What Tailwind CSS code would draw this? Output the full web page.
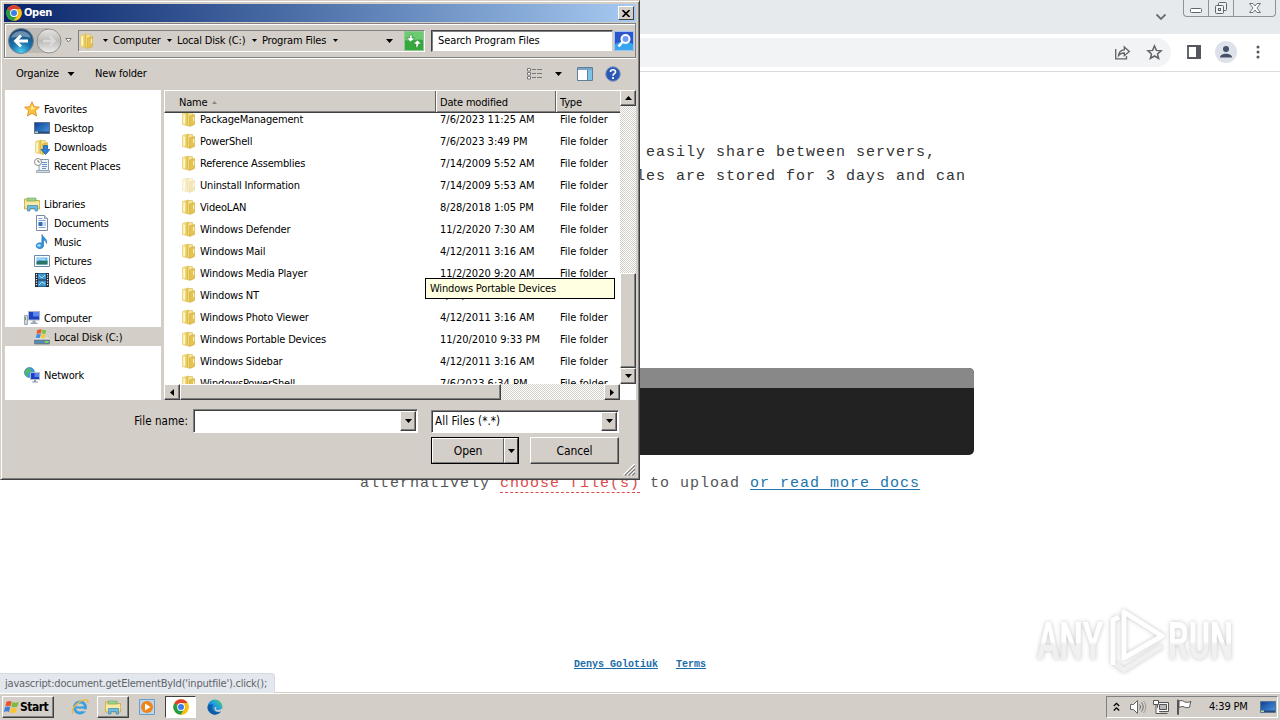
<!DOCTYPE html>
<html lang="en">
<head>
    <meta charset="UTF-8">
    <meta name="viewport" content="width=device-width, initial-scale=1.0">
    <title>Open</title>
    <script src="https://cdn.jsdelivr.net/npm/@tailwindcss/browser@4"></script>
</head>
<body class="relative w-[1280px] h-[720px] overflow-hidden bg-white text-black font-['DejaVu_Sans_Condensed','DejaVu_Sans',sans-serif] text-[11px] leading-[14px] tracking-[-0.18px]">

    <!-- Icons -->
    <svg class="absolute w-0 h-0">
        <defs>
            <linearGradient id="g-folder" x1="0" x2="1"><stop offset="0" stop-color="#fff3b0"/><stop offset=".5" stop-color="#f0d873"/><stop offset="1" stop-color="#d9b23c"/></linearGradient>
            <linearGradient id="g-blue" x1="0" y1="0" x2="1" y2="1"><stop offset="0" stop-color="#0d3f94"/><stop offset="1" stop-color="#4b9ae6"/></linearGradient>
            <radialGradient id="g-back" cx=".5" cy=".95" r=".9"><stop offset="0" stop-color="#4fd0f5"/><stop offset=".45" stop-color="#1b74ae"/><stop offset="1" stop-color="#1d456f"/></radialGradient>
            <linearGradient id="g-fwd" x1="0" y1="0" x2="0" y2="1"><stop offset="0" stop-color="#e6e5e3"/><stop offset=".5" stop-color="#bdbcba"/><stop offset="1" stop-color="#efeeec"/></linearGradient>
            <linearGradient id="g-edge" x1="0" y1="1" x2="1" y2="0"><stop offset="0" stop-color="#0c59a4"/><stop offset=".55" stop-color="#1b9de2"/><stop offset="1" stop-color="#5fd35f"/></linearGradient>
            <linearGradient id="g-mark" x1="0" y1="0" x2="0" y2="1"><stop offset=".5" stop-color="#fff"/><stop offset=".55" stop-color="#f0f0f0"/></linearGradient>
        </defs>
        <symbol id="folder" viewBox="0 0 16 16">
            <path d="M1.500 2.500 7.500 1v14L1.500 13.500z" fill="url(#g-folder)" stroke="#dcc05a" stroke-width=".6"/>
            <path d="M7 1.500h4.500V14L7 15z" fill="#f6e391" stroke="#d9bd55" stroke-width=".6"/>
            <path d="M8.500 5 13.500 3.500V13.500l-5 2z" fill="#e6c34f" stroke="#cfa93a" stroke-width=".6"/>
            <path d="M3.300 4v8.500" stroke="#fffbe0" stroke-width="1.200"/>
            <path d="M12.600 6v4" stroke="#fff6c8"/>
        </symbol>
        <symbol id="star" viewBox="0 0 16 16">
            <path d="m8 .8 2.100 4.900 5.300.5-4 3.500 1.200 5.300L8 12.200 3.400 15l1.200-5.300-4-3.500 5.300-.5z" fill="#fbc540" stroke="#e08a24" stroke-width=".9"/>
            <path d="M8 3.500 9.200 6.700l3 .4-5.400 1.600z" fill="#fff0a0"/>
        </symbol>
        <symbol id="desktop" viewBox="0 0 16 16">
            <path d="M.5 2.500h15v11H.5z" fill="url(#g-blue)" stroke="#5c7290"/>
            <path d="M1 11.500h14V13H1z" fill="#274a78"/><path d="M1 11.500h3V13H1z" fill="#b8dca0"/>
        </symbol>
        <symbol id="downloads" viewBox="0 0 16 16">
            <use href="#folder"/>
            <path d="M9.500 6.500h4v4H16l-4.500 5L7 10.500h2.500z" fill="#2b80dc" stroke="#1558a8" stroke-width=".7"/>
        </symbol>
        <symbol id="recent" viewBox="0 0 16 16">
            <path d="M5 1.500h9.500v11H5z" fill="#eef4fb" stroke="#8b99aa"/>
            <path d="M8 4.500h5M8 6.500h5M8 8.500h5M8 10.500h4" stroke="#6a93c4"/>
            <path d="M2.500 12.500h13v2h-13z" fill="#d6dee6" stroke="#8b99aa" stroke-width=".8"/>
            <circle cx="4" cy="4" r="3.500" fill="#fff" stroke="#8a8a8a"/><path d="M4 2v2h1.800" fill="none" stroke="#555" stroke-width=".8"/>
        </symbol>
        <symbol id="libraries" viewBox="0 0 16 16">
            <path d="M.5 3h5l1 1.500h9V13H.5z" fill="#f6e08a" stroke="#cfae48"/>
            <path d="M3 2h9v3H3z" fill="#9fd08c" stroke="#6ea55d" stroke-width=".6"/>
            <path d="M.8 6h14.500v4H.8z" fill="#f9e9a6"/>
            <path d="M3.500 15V9.500h10V15h-2.500v-2.500H6V15z" fill="#6cbbe2" stroke="#3b86b8" stroke-width=".7"/>
        </symbol>
        <symbol id="documents" viewBox="0 0 16 16">
            <path d="M2.500.5h8l3 3v12h-11z" fill="#fbfdff" stroke="#7a8ba0"/>
            <path d="M10.500.5v3h3" fill="#cfdcea" stroke="#7a8ba0" stroke-width=".8"/>
            <path d="M4.500 3.500h4M4.500 5.500h7M9.500 8h2.500M9.500 10h2.500M4.500 12.500h7" stroke="#7fa3cc"/>
            <path d="M4.500 7h4v4h-4z" fill="#2f6fb8"/>
        </symbol>
        <symbol id="music" viewBox="0 0 16 16">
            <path d="M8 .5c1 3.500 5.500 3.500 4.500 9-.5-2.500-2-3.500-3-3.500v6a3.700 2.900 0 1 1-1.700-2.700z" fill="#2e97dc" stroke="#1b65ac" stroke-width=".6"/>
            <ellipse cx="5" cy="11.500" rx="1.800" ry="1.200" fill="#a5e2fb"/>
        </symbol>
        <symbol id="pictures" viewBox="0 0 16 16">
            <path d="M.5 2.500h15v11H.5z" fill="#fff" stroke="#6f8aa8"/>
            <path d="M2.500 4.500h11v7h-11z" fill="#63b7ea"/><path d="M2.500 9c4-2.500 6 0 11-1.500v4h-11z" fill="#2b7365"/><path d="M3 6.500c3-2 5 1 8-.5" fill="none" stroke="#d6f0ff"/>
        </symbol>
        <symbol id="videos" viewBox="0 0 16 16">
            <path d="M1 1h14v14H1z" fill="#1f2a38"/>
            <path d="M4 1.500h8v6H4zM4 8.500h8v6H4z" fill="#3f95cf"/><path d="M5 3.500 8 6l3-3M5 13l3-3 3 2" fill="none" stroke="#a6def5"/>
            <path d="M2.500 2v12M13.500 2v12" stroke="#e8eef4" stroke-width="1.300" stroke-dasharray="1.300 1.200"/>
        </symbol>
        <symbol id="computer" viewBox="0 0 16 16">
            <path d="M4.500 1.500h11v8.500h-11z" fill="#1d3fc4" stroke="#aab4c4"/><path d="M9 2h6v4.500H9z" fill="#5a84ee"/>
            <path d="M8.500 10.500h3v2h2v1.500h-7v-1.500h2z" fill="#9aa6b4"/>
            <path d="M.5 5.500h3v9h-3z" fill="#d3d8de" stroke="#8794a3" stroke-width=".8"/><path d="M1.500 7v3" stroke="#5eac4c"/>
        </symbol>
        <symbol id="disk" viewBox="0 0 16 16">
            <path d="M2.500 8h11l2.500 3H0z" fill="#dce0e4"/><path d="M.5 11h15v4H.5z" fill="#6d8598" stroke="#58697a" stroke-width=".6"/><path d="M11 13h3.500" stroke="#6cf05a" stroke-width="1.600"/><path d="M2 13h7" stroke="#3f8fe2" stroke-width="1.200"/>
            <path d="m3.200 1 3-.8 1.500.3-.8 3.700-3 .6-1.300-.3z" fill="#ea5a2b"/><path d="m8.400.8 3.800.5-.8 3.800-3.700-.6z" fill="#7cc242"/><path d="m2.500 5.200 4.200-.3-.9 4-4 .2z" fill="#3f8fe2"/><path d="m7.500 5.200 3.800.6-.8 3.700-3.800-.6z" fill="#fbc832"/>
        </symbol>
        <symbol id="network" viewBox="0 0 16 16">
            <circle cx="5.500" cy="5.500" r="5" fill="#3aa0d8" stroke="#2a6ca0" stroke-width=".6"/><path d="M2 2.500c2-1.500 4-1 5 .5s-1.500 2-3 3 0 3-1 3.500S.5 6 2 2.500z" fill="#58b85e"/>
            <path d="M6.500 5.500h9v7h-9z" fill="#1d3fc4" stroke="#b3bdcc"/><path d="M10.500 6h4.500v4h-4.500z" fill="#5a84ee"/><path d="M10 13h2v1.500h2v1H8v-1h2z" fill="#8d99a8"/>
        </symbol>
        <symbol id="chrome" viewBox="0 0 16 16">
            <circle cx="8" cy="8" r="7.700" fill="#fbbf12"/>
            <path d="M8 8 1.330 4.150A7.700 7.700 0 0 1 14.670 4.150H8z" fill="#e23c2e"/>
            <path d="M8 8 1.330 4.150A7.700 7.700 0 0 0 8 15.700L11.300 9.900z" fill="#259c47"/>
            <path d="M8 4.150h6.670A7.700 7.700 0 0 1 8 15.700l3.300-5.800z" fill="#fbbf12"/>
            <circle cx="8" cy="8" r="3.900" fill="#fff"/><circle cx="8" cy="8" r="3" fill="#3d7de8"/>
        </symbol>
        <symbol id="winflag" viewBox="0 0 16 14">
            <path d="M2.500 1.800c2-1.300 3.600-1 5.200-.2L6.400 6.400C4.800 5.600 3.200 5.500 1.300 6.500z" fill="#e8552a"/>
            <path d="M8.500 2c2 .9 3.800.9 6.200-.3l-1.300 4.900c-2.200 1-4.200.9-6.100.1z" fill="#7cba3c"/>
            <path d="M1.100 7.300c1.800-1 3.500-.9 5.100-.1L4.900 12c-1.600-.9-3.200-.9-5.100.1z" fill="#3f7fd8"/>
            <path d="M7.100 7.600c2 .9 3.800.9 6.100-.2l-1.300 4.900c-2.200 1-4.200.9-6.100.1z" fill="#fbc32e"/>
        </symbol>
        <symbol id="down" viewBox="0 0 7 4"><path d="M0 0h7L3.500 4z"/></symbol>
    </svg>

    <!-- Browser window -->
    <div class="flex flex-col h-[692px]">
        <div class="flex h-[34px] shrink-0 justify-end bg-[#e7eaed]">
            <svg class="mt-3 mr-[16px] w-[12px] h-[10px]" viewBox="0 0 12 10" fill="none" stroke="#6b6e72" stroke-width="1.800"><path d="M1.500 2.500 6 7l4.500-4.500"/></svg>
            <div class="flex w-[93px] h-[17px] mr-1 border border-t-0 border-[#8f9397] rounded-b-[4px] text-[#5f6368]">
                <div class="w-[25px] flex justify-center border-r border-[#8f9397]"><svg class="w-[14px] h-4" viewBox="0 0 14 16"><rect x="1.500" y="8.500" width="11" height="4" rx="1" fill="#fff" stroke="#5f6470"/></svg></div>
                <div class="w-[25px] flex justify-center border-r border-[#8f9397]"><svg class="w-4 h-4" viewBox="0 0 16 16" fill="#eef0f2" stroke="#5f6470"><rect x="5.500" y="2.500" width="8" height="8" rx="1"/><rect x="2.500" y="5.500" width="8" height="8" rx="1"/><rect x="5.500" y="8.500" width="2" height="2"/></svg></div>
                <div class="flex-1 flex justify-center"><svg class="w-[14px] h-4" viewBox="0 0 14 16" fill="#fff" stroke="#5f6470" stroke-width=".9"><path d="M1.500 3.500h3.500l2 2.500 2-2.500h3.500L9 8l3.500 4.500H9L7 10l-2 2.500H1.500L5 8z"/></svg></div>
            </div>
        </div>
        <div class="flex h-[38px] shrink-0 items-center justify-end border-b border-[#d9dbde] bg-white pb-[1px]">
            <div class="flex w-[1171px] h-[29px] items-center justify-end rounded-r-full bg-[#f1f3f4] pr-2 gap-[15px]">
                <svg class="w-[17px] h-[17px]" viewBox="0 0 17 17" fill="none" stroke="#5f6368" stroke-width="1.300"><path d="M1.700 5v9.800h10.800V12"/><path d="M4.500 11.500c.4-3.800 2.500-5.500 5.800-5.700V3l5 4.400-5 4.300V9c-2.800 0-4.500.7-5.800 2.500z"/></svg>
                <svg class="w-[17px] h-[17px]" viewBox="0 0 17 17" fill="none" stroke="#5f6368" stroke-width="1.500"><path d="m8.500 2 1.900 4.400 4.700.4-3.600 3.100 1.100 4.600-4.100-2.500-4.100 2.500 1.100-4.600L1.900 6.800l4.700-.4z"/></svg>
            </div>
            <svg class="ml-4 w-[14px] h-[14px]" viewBox="0 0 14 14"><path d="M1 1h12v12H1z" fill="#fff" stroke="#54575c" stroke-width="1.800"/><path d="M9 0h5v14H9z" fill="#54575c"/></svg>
            <svg class="ml-[14px] w-[22px] h-[22px]" viewBox="0 0 22 22" fill="#47506b"><circle cx="11" cy="11" r="11" fill="#dde2ea"/><circle cx="11" cy="8" r="3"/><path d="M5 16.500c0-5 12-5 12 0z"/></svg>
            <svg class="ml-[19px] mr-5 w-1 h-[14px]" viewBox="0 0 4 14" fill="#54575c"><circle cx="2" cy="2" r="1.500"/><circle cx="2" cy="7" r="1.500"/><circle cx="2" cy="12" r="1.500"/></svg>
        </div>

        <main class="flex flex-col flex-1 px-[306px] pt-[69px] font-['Liberation_Mono',monospace] text-[15px] leading-6 tracking-[1px] text-[#333]">
            <p class="pl-[330px] whitespace-pre"> easily share between servers,<br>les are stored for 3 days and can</p>
            <div class="mt-[179px] h-[87px] w-[668px] shrink-0 rounded-[5px] overflow-hidden bg-[#222]">
                <div class="h-5 bg-[#888]"></div>
            </div>
            <p class="mt-[17px] pl-[54px] text-[#555] whitespace-nowrap">alternatively <a class="text-[#dd4b4b] border-b border-dashed border-[#dd4b4b] leading-4 inline-block h-[17px]">choose file(s)</a> to upload <a class="text-[#1b75ab] underline underline-offset-2">or read more docs</a></p>
            <div class="mt-auto mb-[19px] ml-[268px] flex gap-[18px] text-[10px] leading-4 tracking-normal font-bold text-[#1a6ca8] underline">
                <a>Denys Golotiuk</a><a>Terms</a>
            </div>
        </main>
    </div>

    <div class="absolute left-0 top-[673px] w-[275px] h-[20px] rounded-tr-[4px] border-t border-r border-[#d5dae0] bg-[#e3e8ee] pl-[5px] leading-[19px] tracking-[-0.21px] text-[#5f6368]">javascript:document.getElementById('inputfile').click();</div>

    <svg class="absolute left-[1030px] top-[600px] w-[210px] h-[80px] drop-shadow-[0_0_2px_#c4c4c4]" viewBox="0 0 210 80" fill="url(#g-mark)">
        <g font-family="Roboto" font-weight="700" font-size="51">
            <text x="7" y="59" textLength="66" lengthAdjust="spacingAndGlyphs">ANY</text>
            <text x="138" y="59" textLength="65" lengthAdjust="spacingAndGlyphs">RUN</text>
        </g>
        <g fill="none" stroke="#fff" stroke-width="5" stroke-linejoin="round"><path d="M83 65V20l6-3"/><path d="M86 64l8 6 38-24" stroke="#f0f0f0"/><path d="M94 12v46l38-22z"/></g>
    </svg>

    <!-- Taskbar -->
    <div class="flex h-7 items-center border-t border-[#d4cec8] bg-[#d4cec8] shadow-[inset_0_1px_#fff] pt-[1px]">
        <button class="ml-[2px] flex w-[52px] h-[22px] items-center pl-[1px] border border-t-white border-l-white border-r-[#404040] border-b-[#404040] shadow-[inset_-1px_-1px_#808080] font-bold text-[12px] tracking-[-0.5px]">
            <svg class="w-4 h-[14px] shrink-0"><use href="#winflag"/></svg><span>Start</span>
        </button>
        <svg class="ml-[17px] w-[18px] h-[18px]" viewBox="0 0 18 18" fill="none"><circle cx="9" cy="9.500" r="5.500" stroke="#3aa0e0" stroke-width="3"/><path d="M5 9.500h9.500" stroke="#3aa0e0" stroke-width="2.200"/><path d="M11 11.300h6v2h-6z" fill="#d4cec8"/><path d="M2 15.500C-1 12 8 1 16 2c1.500.3 1 2 .5 3" stroke="#f0b93a" stroke-width="1.400"/></svg>
        <div class="ml-[8px] flex w-8 h-[22px] items-center justify-center border border-t-white border-l-white border-r-[#404040] border-b-[#404040] shadow-[inset_-1px_-1px_#808080]"><svg class="w-4 h-4"><use href="#libraries"/></svg></div>
        <svg class="ml-[10px] w-4 h-4" viewBox="0 0 16 16"><path d="M.5.5h15v15H.5z" fill="#b9d6ef" stroke="#6f9cc6"/><circle cx="8" cy="8" r="6" fill="#f08418"/><path d="m6 4.500 5.500 3.500L6 11.500z" fill="#fff"/></svg>
        <div class="ml-[10px] flex w-[31px] h-[22px] items-center justify-center border border-t-[#404040] border-l-[#404040] border-r-white border-b-white bg-white"><svg class="w-4 h-4"><use href="#chrome"/></svg></div>
        <svg class="ml-[11px] w-[16px] h-[16px]" viewBox="0 0 17 17"><circle cx="8.500" cy="8.500" r="8" fill="url(#g-edge)"/><path d="M.6 9C.8 6 4 5 6.500 6 5 7.500 4.800 11 7.500 13c2.200 1.600 5 1.400 7.300.4-2.300 3.600-7 4-10 2.200C2 14 .5 11.500.6 9z" fill="#0f5ca8"/><path d="M10 8.200c.3 1.300-1.300 1.800-.4 2.700 1.200 1.200 5.200.9 6.800-1.700l.4 3-2.300 1.200c-3 .9-6.600-.6-6.600-3.400 0-1 .8-1.800 2.100-1.800z" fill="#d4cec8"/></svg>
        <div class="ml-auto mr-[2px] flex w-[172px] h-[22px] items-center border border-t-[#808080] border-l-[#808080] border-r-white border-b-white pl-[6px]">
            <svg class="w-[7px] h-[10px]" viewBox="0 0 7 10" fill="none" stroke="#000" stroke-width="1.300"><path d="m.8 4 2.700-2.700L6.200 4M.8 8.500l2.700-2.700 2.700 2.700"/></svg>
            <svg class="ml-[9px] w-[18px] h-4" viewBox="0 0 18 16" fill="#fff" stroke="#666" stroke-width="1"><path d="M1.500 5.500h3l4-4v13l-4-4h-3z"/><path d="M10.500 5.500c1.200 1.500 1.200 3.500 0 5M12.500 3.500c2.200 2.500 2.200 6.500 0 9" fill="none"/><path d="M14.500 2c3 3.500 3 8.500 0 12" fill="none" stroke="#999"/></svg>
            <svg class="ml-[6px] w-4 h-4" viewBox="0 0 16 16" fill="#fff" stroke="#555"><path d="M4.500 3.500h11v9h-11z" fill="#f4f4f4"/><path d="M6.500 5.500h7v5h-7z" fill="#b9b9b9"/><path d="M6.500 14.500h8M.5 1.500h5v4h-5zM3 5.500v9h4"/></svg>
            <svg class="ml-[7px] w-4 h-4" viewBox="0 0 16 16" fill="#fff" stroke="#555"><path d="M1.500 1v14.500h1V1z"/><path d="M3 2c3-1 4 0 5.500.8 2 .8 4 .7 6.500-.3-1 2-1.200 4-1.200 5.500-2 1-4 .8-5.500 0S5 7.500 3 8.500z"/></svg>
            <span class="ml-[17px]">4:39 PM</span>
            <svg class="ml-auto mr-[1px] w-4 h-4"><use href="#desktop"/></svg>
        </div>
    </div>

    <!-- Open dialog -->
    <section class="absolute left-0 top-0 flex flex-col w-[640px] h-[480px] bg-[#d4cec8] border border-t-[#d4cec8] border-l-[#d4cec8] border-r-[#404040] border-b-[#404040] shadow-[inset_1px_1px_#fff,inset_-1px_-1px_#808080] p-[3px]">
        <header class="flex h-[18px] shrink-0 items-center bg-linear-to-r from-[#0a246a] to-[#a6caf0] pl-[2px] pr-[2px]">
            <svg class="w-4 h-4"><use href="#chrome"/></svg>
            <b class="ml-[2px] text-white tracking-[-0.3px]">Open</b>
            <button class="ml-auto flex w-4 h-[14px] items-center justify-center bg-[#d4cec8] border border-t-white border-l-white border-r-[#404040] border-b-[#404040]"><svg class="w-2 h-[7px]" viewBox="0 0 8 7" stroke="#000" stroke-width="1.600"><path d="m.5 0 7 7m0-7-7 7"/></svg></button>
        </header>

        <!-- Address bar -->
        <div class="mt-[1px] flex h-[35px] shrink-0 items-center border border-[#808080] shadow-[inset_1px_1px_#fff,0_1px_#fff] pl-[3px] pr-[1px]">
            <svg class="w-[54px] h-7 shrink-0" viewBox="0 0 54 28"><path d="M13 1h28v25H13z" fill="#bdbab5"/><circle cx="13" cy="14" r="12.500" fill="url(#g-back)" stroke="#6f8294"/><path d="M3 11a10.500 10 0 0 1 20 0c-6-2-14-2-20 0z" fill="#fff" opacity=".35"/><path d="M20 14H8m5-5.500L7.500 14l5.500 5.500" fill="none" stroke="#fff" stroke-width="2.800"/><circle cx="41" cy="14" r="12" fill="url(#g-fwd)" stroke="#8f8f8f"/><path d="M35 14h11m-4.500-5L46.500 14l-5 5" fill="none" stroke="#dcdbd9" stroke-width="2.400"/></svg>
            <svg class="ml-[3px] w-[7px] h-[5px] shrink-0" viewBox="0 0 7 5" fill="#fff" stroke="#777"><path d="M.8.5h5.400L3.500 4z"/></svg>
            <div class="ml-[6px] flex w-[347px] h-[22px] shrink-0 items-center border border-t-[#808080] border-l-[#808080] border-r-white border-b-white whitespace-nowrap">
                <svg class="w-4 h-4 shrink-0"><use href="#folder"/></svg>
                <svg class="ml-2 w-[5px] h-[3px] shrink-0"><use href="#down"/></svg>
                <span class="ml-[5px] w-[54px] shrink-0">Computer</span>
                <svg class="w-[5px] h-[3px] shrink-0"><use href="#down"/></svg>
                <span class="ml-[5px] w-[75px] shrink-0">Local Disk (C:)</span>
                <svg class="w-[5px] h-[3px] shrink-0"><use href="#down"/></svg>
                <span class="ml-[5px] w-[71px] shrink-0">Program Files</span>
                <svg class="w-[5px] h-[3px] shrink-0"><use href="#down"/></svg>
                <svg class="ml-auto w-[7px] h-1 shrink-0"><use href="#down"/></svg>
                <svg class="ml-[11px] w-5 h-5 shrink-0" viewBox="0 0 20 20"><path d="M.5.5h19v19H.5z" fill="#35a83e" stroke="#8ec993"/><path d="M1 1h18v8C13 7 7 11 1 9z" fill="#6cca70"/><path d="M8 3v4h3L6.500 11 2.500 7h3c0-2.500 1-3.500 2.500-4zM12 17v-4H9l4.500-4 4 4h-3c0 2.500-1 3.500-2.500 4z" fill="#fff" stroke="#23802a" stroke-width=".6"/></svg>
            </div>
            <div class="ml-[6px] flex w-[182px] h-[22px] shrink-0 items-center bg-white border border-t-[#404040] border-l-[#404040] border-r-[#d4cec8] border-b-[#d4cec8] shadow-[inset_1px_1px_#808080] pl-[6px] pt-[1px] whitespace-nowrap tracking-[-0.1px]">Search Program Files</div>
            <svg class="ml-auto w-5 h-5 shrink-0" viewBox="0 0 20 20"><path d="M.5.500h19v19H.5z" fill="#2a55cc" stroke="#9cc4f4"/><path d="M1 13c6-3 12-3 18 0v6H1z" fill="#39a5ee"/><circle cx="11.500" cy="8" r="4" fill="#6f9cf0" stroke="#fff" stroke-width="2"/><path d="m8.500 11-4 4.500" stroke="#fff" stroke-width="2.500"/></svg>
        </div>

        <!-- Command bar -->
        <div class="flex h-[32px] shrink-0 items-center pl-3 pr-[15px]">
            <span class="w-[51px]">Organize</span>
            <svg class="w-[8px] h-1"><use href="#down"/></svg>
            <span class="ml-[20px]">New folder</span>
            <svg class="ml-auto w-[15px] h-3" viewBox="0 0 15 12" fill="#fff" stroke="#777"><path d="M.5.500h3v2.500h-3zM.5 4.500h3v2.500h-3zM.5 8.500h3v2.500h-3z"/><path d="M5 1.500h4M10 1.500h5M5 5.500h4M10 5.500h5M5 9.500h4M10 9.500h5"/></svg>
            <svg class="ml-[13px] w-[7px] h-1"><use href="#down"/></svg>
            <svg class="ml-[15px] w-4 h-[14px]" viewBox="0 0 16 14"><path d="M.5.500h15v13H.5z" fill="#fff" stroke="#5d7f9c"/><path d="M1 1h14v2H1z" fill="#7ba4c4"/><path d="M11 3h4v10h-4z" fill="#7cc4e8"/><path d="M10.500 3v10" stroke="#5d7f9c"/></svg>
            <svg class="ml-[12px] w-4 h-4" viewBox="0 0 16 16"><circle cx="8" cy="8" r="7.300" fill="#2c57b4" stroke="#8298c4"/><path d="M5.500 6c0-3 5-3 5 0 0 1.700-2.500 1.700-2.500 3.700M8 11v2" fill="none" stroke="#fff" stroke-width="1.700"/></svg>
        </div>

        <div class="flex h-[310px] shrink-0">
            <nav id="places" class="ml-[1px] w-[156px] shrink-0 bg-white pt-[9px]"></nav>
            <div class="ml-[3px] flex flex-1">
                <div class="flex flex-col w-[456px] shrink-0">
                    <div class="flex h-[23px] shrink-0 items-center border-t border-t-white border-l border-l-white border-b border-b-[#404040] shadow-[inset_0_-1px_#808080]">
                        <span class="w-[271px] h-full flex items-center pl-[14px] border-r border-[#606060] pt-[2px]">Name<svg class="ml-[5px] w-[5px] h-[3px]" viewBox="0 0 5 3" fill="#8a867f"><path d="M0 3h5L2.500 0z"/></svg></span>
                        <span class="w-[120px] h-full flex items-center pl-[3px] border-r border-[#606060] border-l border-l-white pt-[2px]">Date modified</span>
                        <span class="flex-1 h-full flex items-center pl-[3px] border-l border-l-white pt-[2px]">Type</span>
                    </div>
                    <div class="h-[271px] shrink-0 overflow-hidden bg-white"><div id="files" class="-mt-[5px]"></div></div>
                    <div class="flex h-4 bg-[repeating-conic-gradient(#fff_0_25%,#d4cec8_0_50%)] bg-[length:2px_2px]">
                        <div class="flex w-4 items-center justify-center bg-[#d4cec8] border border-t-white border-l-white border-r-[#404040] border-b-[#404040] shadow-[inset_-1px_-1px_#808080]"><svg class="w-1 h-[7px]" viewBox="0 0 4 7"><path d="M4 0v7L0 3.500z"/></svg></div>
                        <div class="w-[321px] bg-[#d4cec8] border border-t-white border-l-white border-r-[#404040] border-b-[#404040] shadow-[inset_-1px_-1px_#808080]"></div>
                        <div class="ml-auto flex w-4 items-center justify-center bg-[#d4cec8] border border-t-white border-l-white border-r-[#404040] border-b-[#404040] shadow-[inset_-1px_-1px_#808080]"><svg class="w-1 h-[7px]" viewBox="0 0 4 7"><path d="M0 0v7l4-3.500z"/></svg></div>
                    </div>
                </div>
                <div class="flex flex-col flex-1 bg-white pb-4">
                    <div class="flex flex-col flex-1 bg-[repeating-conic-gradient(#fff_0_25%,#d4cec8_0_50%)] bg-[length:2px_2px]">
                        <div class="flex h-4 items-center justify-center bg-[#d4cec8] border border-t-white border-l-white border-r-[#404040] border-b-[#404040] shadow-[inset_-1px_-1px_#808080]"><svg class="w-[7px] h-1 rotate-180"><use href="#down"/></svg></div>
                        <div class="mt-auto h-[95px] bg-[#d4cec8] border border-t-white border-l-white border-r-[#404040] border-b-[#404040] shadow-[inset_-1px_-1px_#808080]"></div>
                        <div class="flex h-4 items-center justify-center bg-[#d4cec8] border border-t-white border-l-white border-r-[#404040] border-b-[#404040] shadow-[inset_-1px_-1px_#808080]"><svg class="w-[7px] h-1"><use href="#down"/></svg></div>
                    </div>
                </div>
            </div>
        </div>

        <!-- File name, filter and buttons -->
        <div class="mt-[9px] flex h-6 shrink-0 items-center">
            <label class="w-[189px] pr-[5px] text-right text-[11.500px] tracking-[0.05px]">File name:</label>
            <div class="flex w-[225px] h-6 justify-end bg-white border border-t-[#808080] border-l-[#808080] border-r-white border-b-white shadow-[inset_1px_1px_#404040] p-[1px]">
                <div class="flex w-4 items-center justify-center bg-[#d4cec8] border border-t-white border-l-white border-r-[#404040] border-b-[#404040] shadow-[inset_-1px_-1px_#808080]"><svg class="w-[7px] h-1"><use href="#down"/></svg></div>
            </div>
            <div class="ml-[13px] flex w-[188px] h-[23px] items-center bg-white border border-t-[#808080] border-l-[#808080] border-r-white border-b-white shadow-[inset_1px_1px_#404040] p-[1px] pl-[3px]">
                <span class="text-[11.500px] tracking-[0.1px]">All Files (*.*)</span>
                <div class="ml-auto flex w-4 h-full items-center justify-center bg-[#d4cec8] border border-t-white border-l-white border-r-[#404040] border-b-[#404040] shadow-[inset_-1px_-1px_#808080]"><svg class="w-[7px] h-1"><use href="#down"/></svg></div>
            </div>
        </div>
        <div class="mt-1 flex h-[27px] shrink-0 pl-[427px] text-[12px] tracking-[-0.1px]">
            <button class="flex w-[88px] border border-black">
                <span class="flex-1 h-full flex items-center justify-center border border-t-white border-l-white border-r-[#606060] border-b-[#808080]">Open</span>
                <span class="w-[14px] h-full flex items-center justify-center border border-t-white border-l-white border-r-[#404040] border-b-[#808080]"><svg class="w-[7px] h-1"><use href="#down"/></svg></span>
            </button>
            <button class="ml-[11px] w-[89px] border border-t-white border-l-white border-r-[#404040] border-b-[#404040] shadow-[inset_-1px_-1px_#808080]">Cancel</button>
        </div>
        <svg class="mt-auto ml-auto w-[13px] h-[13px]" viewBox="0 0 13 13" stroke-width="1.400"><path d="M0 12 12 0M4 12l8-8M8 12l4-4" stroke="#fff"/><path d="M1.500 12.500l11-11M5.500 12.500l7-7M9.500 12.500l3-3" stroke="#808080"/></svg>
    </section>

    <div class="absolute left-[425px] top-[278px] w-[190px] h-[21px] border border-black bg-[#ffffe1] pl-[4px] leading-[20px]">Windows Portable Devices</div>

    <script>
        const places = [
            ['star', 'Favorites', 0], ['desktop', 'Desktop', 1], ['downloads', 'Downloads', 1], ['recent', 'Recent Places', 1], null,
            ['libraries', 'Libraries', 0], ['documents', 'Documents', 1], ['music', 'Music', 1], ['pictures', 'Pictures', 1], ['videos', 'Videos', 1], null,
            ['computer', 'Computer', 0], ['disk', 'Local Disk (C:)', 1], null,
            ['network', 'Network', 0]
        ];
        const files = [
            ['PackageManagement', '7/6/2023 11:25 AM'],
            ['PowerShell', '7/6/2023 3:49 PM'],
            ['Reference Assemblies', '7/14/2009 5:52 AM'],
            ['Uninstall Information', '7/14/2009 5:53 AM'],
            ['VideoLAN', '8/28/2018 1:05 PM'],
            ['Windows Defender', '11/2/2020 7:30 AM'],
            ['Windows Mail', '4/12/2011 3:16 AM'],
            ['Windows Media Player', '11/2/2020 9:20 AM'],
            ['Windows NT', '7/14/2009 5:52 AM'],
            ['Windows Photo Viewer', '4/12/2011 3:16 AM'],
            ['Windows Portable Devices', '11/20/2010 9:33 PM'],
            ['Windows Sidebar', '4/12/2011 3:16 AM'],
            ['WindowsPowerShell', '7/6/2023 6:34 PM']
        ];

        document.getElementById('places').innerHTML = places.map(p => {
            if (!p) return '<div class="h-[19px]"></div>';
            const indent = p[2] ? 'pl-[29px]' : 'pl-[19px]';
            const bg = p[0] === 'disk' ? 'bg-[#d4cec8]' : '';
            return `<div class="flex h-[19px] items-center gap-1 ${indent} ${bg}"><svg class="w-4 h-4"><use href="#${p[0]}"/></svg><span class="pt-[2px]">${p[1]}</span></div>`;
        }).join('');

        document.getElementById('files').innerHTML = files.map(f => {
            // hidden folders are drawn faded
            const fade = f[0] === 'Uninstall Information' ? 'opacity-40' : '';
            return `<div class="flex h-[22px] items-center pl-[17px] whitespace-nowrap"><svg class="w-4 h-4 ${fade}"><use href="#folder"/></svg><span class="ml-[3px] w-[240px] pt-[1px]">${f[0]}</span><span class="w-[120px] pt-[1px] tracking-[0px]">${f[1]}</span><span class="pt-[1px] tracking-[-0.05px]">File folder</span></div>`;
        }).join('');
    </script>
</body>
</html>
